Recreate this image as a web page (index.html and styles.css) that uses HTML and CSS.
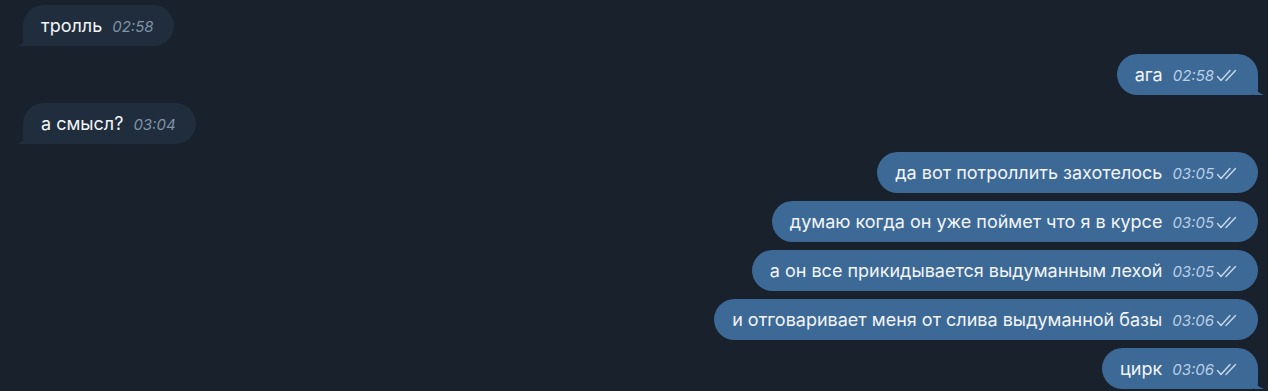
FILE: index.html
```html
<!DOCTYPE html>
<html lang="ru">
<head>
<meta charset="utf-8">
<link rel="stylesheet" href="styles.css">
</head>
<body>
<div class="chat">
  <div class="row in"><div class="bubble tail">тролль<span class="time">02:58</span><svg class="tl" viewBox="0 0 10 14"><path d="M10 0 C10 6 8 11 0 14 L10 14 Z"/></svg></div></div>
  <div class="row out"><div class="bubble tail">ага<span class="time">02:58</span><svg class="chk" viewBox="0 0 22 13"><path d="M1.5 7.5 L5 11.5 L14 1.5 M10 11.5 L19.5 1.5"/></svg><svg class="tr" viewBox="0 0 10 14"><path d="M0 0 C0 6 2 11 10 14 L0 14 Z"/></svg></div></div>
  <div class="row in"><div class="bubble tail">а смысл?<span class="time">03:04</span><svg class="tl" viewBox="0 0 10 14"><path d="M10 0 C10 6 8 11 0 14 L10 14 Z"/></svg></div></div>
  <div class="row out"><div class="bubble">да вот потроллить захотелось<span class="time">03:05</span><svg class="chk" viewBox="0 0 22 13"><path d="M1.5 7.5 L5 11.5 L14 1.5 M10 11.5 L19.5 1.5"/></svg></div></div>
  <div class="row out"><div class="bubble">думаю когда он уже поймет что я в курсе<span class="time">03:05</span><svg class="chk" viewBox="0 0 22 13"><path d="M1.5 7.5 L5 11.5 L14 1.5 M10 11.5 L19.5 1.5"/></svg></div></div>
  <div class="row out"><div class="bubble">а он все прикидывается выдуманным лехой<span class="time">03:05</span><svg class="chk" viewBox="0 0 22 13"><path d="M1.5 7.5 L5 11.5 L14 1.5 M10 11.5 L19.5 1.5"/></svg></div></div>
  <div class="row out"><div class="bubble">и отговаривает меня от слива выдуманной базы<span class="time">03:06</span><svg class="chk" viewBox="0 0 22 13"><path d="M1.5 7.5 L5 11.5 L14 1.5 M10 11.5 L19.5 1.5"/></svg></div></div>
  <div class="row out"><div class="bubble tail">цирк<span class="time">03:06</span><svg class="chk" viewBox="0 0 22 13"><path d="M1.5 7.5 L5 11.5 L14 1.5 M10 11.5 L19.5 1.5"/></svg><svg class="tr" viewBox="0 0 10 14"><path d="M0 0 C0 6 2 11 10 14 L0 14 Z"/></svg></div></div>
</div>
</body>
</html>
```
FILE: styles.css
```css
html, body {
  margin: 0;
  padding: 0;
  background: #18212c;
  height: 100%;
  overflow: hidden;
}
.chat {
  display: flex;
  flex-direction: column;
  gap: 8px;
  padding: 5px 10px 0 23px;
  font-family: Inter, "Noto Sans", sans-serif;
  font-size: 18px;
  color: #f2f5f8;
}
.row {
  display: flex;
}
.row.out {
  justify-content: flex-end;
}
.bubble {
  position: relative;
  display: flex;
  align-items: center;
  height: 41px;
  box-sizing: border-box;
  padding: 0 20px 0 18px;
  border-radius: 20.5px;
  white-space: nowrap;
}
.in .bubble {
  background: #1f2d3c;
}
.out .bubble {
  background: #3d6997;
}
.in .bubble.tail {
  border-bottom-left-radius: 6px;
}
.out .bubble.tail {
  border-bottom-right-radius: 6px;
}
.time {
  font-style: italic;
  font-size: 15px;
  margin-left: 10px;
  padding-top: 2px;
}
.in .time {
  color: #8193a6;
}
.out .time {
  color: #b9cfe6;
}
.chk {
  width: 22px;
  height: 13px;
  margin-left: 2px;
  margin-top: 1px;
  fill: none;
  stroke: #c7d9ec;
  stroke-width: 1.4;
  stroke-linecap: round;
  stroke-linejoin: round;
}
.tl, .tr {
  position: absolute;
  bottom: 0;
  width: 10px;
  height: 14px;
}
.tl {
  left: -6px;
  fill: #1f2d3c;
}
.tr {
  right: -6px;
  fill: #3d6997;
}
```
